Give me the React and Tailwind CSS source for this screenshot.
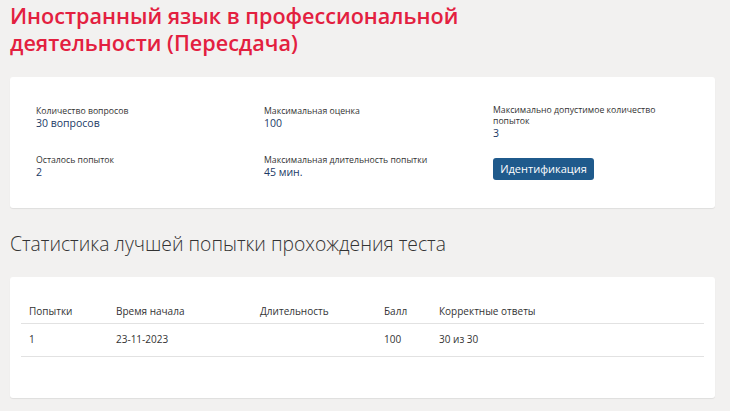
import React from 'react';

const info = [
    { label: 'Количество вопросов', value: '30 вопросов' },
    { label: 'Максимальная оценка', value: '100' },
    { label: 'Максимально допустимое количество попыток', value: '3' },
    { label: 'Осталось попыток', value: '2' },
    { label: 'Максимальная длительность попытки', value: '45 мин.' },
];

const rows = [
    { attempt: '1', start: '23-11-2023', duration: '', score: '100', correct: '30 из 30' },
];

const InfoItem = ({ label, value }) => (
    <div className="w-[172px]">
        <div className="text-[8.7px] leading-[11px] text-[#333]">{label}</div>
        <div className="text-[10.5px] leading-[12px] text-[#1b3a66]">{value}</div>
    </div>
);

const App = () => {
    return (
        <div className="min-h-[411px] bg-[#f2f1f0] px-[10px] pt-[2px] pb-4" style={{ fontFamily: '"Open Sans", "Noto Sans", sans-serif' }}>
            <h1 className="text-[21.6px] leading-[27px] font-semibold text-[#e3203f] max-w-[480px]">
                Иностранный язык в профессиональной деятельности (Пересдача)
            </h1>

            <div className="mt-[21px] bg-white rounded-[3px] shadow-[0_1px_1px_rgba(0,0,0,0.08)] w-[705px] h-[131px] pl-[26px] pt-[27px]">
                <div className="grid grid-cols-[228px_229px_200px] gap-y-[15px]">
                    <div className="pt-[2px]"><InfoItem {...info[0]} /></div>
                    <div className="pt-[2px]"><InfoItem {...info[1]} /></div>
                    <div className="pt-[1px]"><InfoItem {...info[2]} /></div>
                    <div className="pt-[1px]"><InfoItem {...info[3]} /></div>
                    <div className="pt-[1px]"><InfoItem {...info[4]} /></div>
                    <div className="pt-[1px]">
                        <button className="w-[101px] h-[22px] rounded-[3px] bg-[#1f5a8c] text-white text-[11px]">Идентификация</button>
                    </div>
                </div>
            </div>

            <h2 className="mt-[24px] text-[19.3px] leading-[24px] font-light text-[#333]">
                Статистика лучшей попытки прохождения теста
            </h2>

            <div className="mt-[21px] bg-white rounded-[3px] shadow-[0_1px_1px_rgba(0,0,0,0.08)] w-[705px] h-[121px] px-[11px] pt-[23px]">
                <table className="w-full text-[10px] text-[#333] border-collapse">
                    <thead>
                        <tr className="border-b border-[#e2e2e2] h-[23px] text-left">
                            <th className="font-normal pl-[8px] w-[95px] text-left">Попытки</th>
                            <th className="font-normal w-[144px] text-left">Время начала</th>
                            <th className="font-normal w-[124px] text-left">Длительность</th>
                            <th className="font-normal w-[55px] text-left">Балл</th>
                            <th className="font-normal text-left">Корректные ответы</th>
                        </tr>
                    </thead>
                    <tbody>
                        {rows.map((r, i) => (
                            <tr key={i} className="border-b border-[#e2e2e2] h-[33px]">
                                <td className="pl-[8px]">{r.attempt}</td>
                                <td>{r.start}</td>
                                <td>{r.duration}</td>
                                <td>{r.score}</td>
                                <td>{r.correct}</td>
                            </tr>
                        ))}
                    </tbody>
                </table>
            </div>
        </div>
    );
};

export default App;
